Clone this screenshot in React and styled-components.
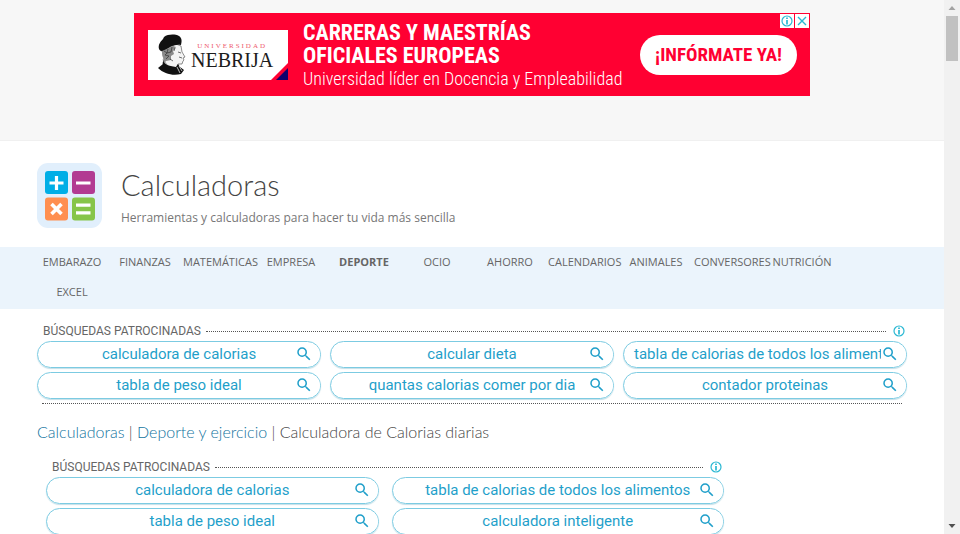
import React from "react";
import styled, { createGlobalStyle } from "styled-components";
import { MdSearch } from "react-icons/md";

const GlobalStyle = createGlobalStyle`
  *, *::before, *::after { box-sizing: border-box; }
  body { margin: 0; background: #fff; font-family: "Open Sans", sans-serif; color: #666; }
  a { color: inherit; text-decoration: none; }
  h1, p { margin: 0; font-weight: 400; }
`;

const Shell = styled.div`
  display: grid;
  grid-template-columns: minmax(0, 1fr) 16px;
  height: 100vh;
  overflow: hidden;
`;

const Page = styled.div`
  min-width: 0;
  overflow: hidden;
`;

const ScrollTrack = styled.div`
  display: flex;
  flex-direction: column;
  align-items: center;
  justify-content: space-between;
  background: #f1f1f1;
`;

const ScrollTop = styled.div`
  display: flex;
  flex-direction: column;
  align-items: center;
`;

const ScrollThumb = styled.div`
  width: 12px;
  height: 45px;
  background: #c1c1c1;
`;

const ArrowBox = styled.svg`
  display: block;
  width: 16px;
  height: 16px;
  fill: ${(p) => (p.$muted ? "#a3a3a3" : "#505050")};
`;

const AdStrip = styled.aside`
  display: flex;
  justify-content: center;
  padding: 13px 0 44px;
  background: #f7f7f7;
  border-bottom: 1px solid #f0f0f0;
`;

const Banner = styled.div`
  position: relative;
  display: flex;
  align-items: center;
  width: 676px;
  height: 83px;
  padding: 0 13px 0 14px;
  background: #ff0032;
  color: #fff;
  font-family: "Roboto Condensed", Roboto, sans-serif;
  font-family: "Liberation Sans Narrow", "Roboto Condensed", Roboto, sans-serif;
`;

const School = styled.div`
  position: relative;
  display: flex;
  align-items: center;
  gap: 4px;
  width: 140px;
  height: 50px;
  padding-left: 9px;
  background: #fff;
  overflow: hidden;
`;

const Portrait = styled.svg`
  width: 30px;
  height: 42px;
  flex: none;
`;

const Corner = styled.svg`
  position: absolute;
  right: 0;
  bottom: 0;
  width: 17px;
  height: 17px;
`;

const SchoolName = styled.div`
  display: flex;
  flex-direction: column;
  align-items: center;
  font-family: "Liberation Serif", serif;
`;

const SchoolKind = styled.span`
  padding-top: 2px;
  font-size: 7px;
  line-height: 8px;
  letter-spacing: 2px;
  color: #ee5a6c;
`;

const SchoolTitle = styled.span`
  font-size: 20px;
  line-height: 20px;
  color: #1c1c1c;
`;

const Pitch = styled.div`
  flex: 1;
  padding: 2px 0 0 15px;
  white-space: nowrap;
`;

const PitchTitle = styled.p`
  && { font-weight: 700; }
  font-size: 22px;
  line-height: 23px;
`;

const PitchText = styled.p`
  && { font-weight: 300; }
  font-size: 18px;
  line-height: 23px;
`;

const AdButton = styled.button`
  width: 157px;
  height: 40px;
  padding: 0;
  border: 0;
  border-radius: 20px;
  background: #fff;
  color: #ff0032;
  font: 700 19px "Liberation Sans Narrow", "Roboto Condensed", Roboto, sans-serif;
  white-space: nowrap;
`;

const AdTools = styled.div`
  position: absolute;
  top: 1px;
  right: 1px;
  display: flex;
  gap: 1px;
`;

const AdTool = styled.button`
  display: grid;
  place-items: center;
  width: 14px;
  height: 14px;
  padding: 0;
  border: 0;
  background: #fff;
  color: #2bb8d3;
`;

const Header = styled.header`
  display: flex;
  gap: 19px;
  padding: 22px 37px 19px;
`;

const Logo = styled.svg`
  width: 65px;
  height: 65px;
`;

const Brand = styled.div`
  padding-top: 5px;
`;

const SiteTitle = styled.h1`
  font: 300 29px/34px Lato, sans-serif;
  color: #444;
`;

const Tagline = styled.p`
  padding-top: 6px;
  font-size: 12px;
  line-height: 20px;
  color: #777;
`;

const Menu = styled.nav`
  display: grid;
  grid-template-columns: repeat(auto-fill, 70px);
  column-gap: 3px;
  row-gap: 9px;
  padding: 4px 37px 7px;
  background: #ebf4fc;
`;

const MenuLink = styled.a`
  display: grid;
  grid-template-columns: minmax(100%, max-content);
  line-height: 21px;
  font-size: 11px;
  font-weight: ${(p) => (p.$active ? 700 : 400)};
  text-align: center;
  white-space: nowrap;
  color: #666;
`;

const Sponsored = styled.section`
  max-width: ${(p) => (p.$narrow ? "678px" : "none")};
  margin: ${(p) => (p.$narrow ? "14px 0 0 46px" : "12px 37px 0")};
  font-family: Roboto, sans-serif;
`;

const SponsoredHead = styled.div`
  display: flex;
  align-items: center;
  height: 20px;
  padding: 0 2px 0 6px;
  font-size: 12px;
  line-height: 20px;
  color: #666;
`;

const Dots = styled.span`
  flex: 1;
  margin: 1px 7px 0 5px;
  border-top: 1px dotted #555;
`;

const InfoButton = styled.button`
  display: grid;
  place-items: center;
  width: 12px;
  height: 12px;
  padding: 0;
  border: 0;
  background: none;
  color: #2bb8d3;
`;

const Pills = styled.div`
  display: grid;
  grid-template-columns: repeat(${(p) => p.$columns}, minmax(0, 1fr));
  column-gap: ${(p) => (p.$columns === 3 ? "9px" : "13px")};
  row-gap: 4px;
`;

const Pill = styled.a`
  position: relative;
  height: 27px;
  padding: 0 10px;
  border: 1px solid #7ccbe2;
  border-radius: 14px;
  box-shadow: 0 1px 1px #c4dfe8;
  font-size: 15px;
  line-height: 24px;
  text-align: center;
  white-space: nowrap;
  overflow: hidden;
  color: #1f9fca;
`;

const PillIcon = styled.span`
  position: absolute;
  top: 3px;
  right: 0;
  display: flex;
  padding-right: 7px;
  background: #fff;
`;

const EndDots = styled.div`
  margin: 4px 5px 0;
  border-top: 1px dotted #555;
`;

const Crumbs = styled.nav`
  padding: 17px 37px 0;
  font: 300 16px/22px Lato, sans-serif;
  color: #444;
`;

const CrumbLink = styled.a`
  && { color: #12749e; }
`;

const menu = [
  "EMBARAZO", "FINANZAS", "MATEMÁTICAS", "EMPRESA", "DEPORTE", "OCIO",
  "AHORRO", "CALENDARIOS", "ANIMALES", "CONVERSORES", "NUTRICIÓN", "EXCEL",
];

const wideSearches = [
  "calculadora de calorias", "calcular dieta", "tabla de calorias de todos los alimentos",
  "tabla de peso ideal", "quantas calorias comer por dia", "contador proteinas",
];

const narrowSearches = [
  "calculadora de calorias", "tabla de calorias de todos los alimentos",
  "tabla de peso ideal", "calculadora inteligente",
];

function InfoIcon() {
  return (
    <svg width="12" height="12" viewBox="0 0 12 12" fill="none" stroke="currentColor" aria-hidden="true">
      <circle cx="6" cy="6" r="5" strokeWidth="1.2" />
      <path d="M6 2.6v1.4M6 5v4.4" strokeWidth="1.7" />
    </svg>
  );
}

function SponsoredBlock({ items, columns }) {
  return (
    <Sponsored $narrow={columns === 2} aria-label="Búsquedas patrocinadas">
      <SponsoredHead>
        <span>BÚSQUEDAS PATROCINADAS</span>
        <Dots />
        <InfoButton aria-label="Información"><InfoIcon /></InfoButton>
      </SponsoredHead>
      <Pills $columns={columns}>
        {items.map((text) => (
          <Pill key={text} href="#">
            {text}
            <PillIcon><MdSearch size={18} /></PillIcon>
          </Pill>
        ))}
      </Pills>
      <EndDots />
    </Sponsored>
  );
}

function AdBanner() {
  return (
    <Banner>
      <School>
        <Portrait viewBox="0 0 30 42" aria-hidden="true">
          <path d="M9 15L8 22l-2 4 5 6 8 3 2-5 4 0 1-3 1-1-1-2 2-1-3-5-1-6-5-2z" fill="#f4f4f4" stroke="#444" strokeWidth=".6" />
          <path d="M2 15C1 11 3 8 6 5l1-2c4-3 11-3 15-1 3 2 3 5 2 9-6-1-11 1-16 6-3 1-5 0-6-2z" fill="#111" />
          <path d="M5 17l11-5 3 1-3 4 1 3-3 2v4l-5 1-3 4c-2-2 1-4 1-6-2-2-2-5-2-8z" fill="#8a8a8a" />
          <path d="M7 17l3 2-2 2 4 1-3 3M11 15l-1 4 4-1M15 13l-1 5M18 14l-1 3M21 18l3 1M22 23l3 1M13 25l3 2" fill="none" stroke="#333" strokeWidth=".7" />
          <path d="M6 26c1 4 5 6 13 7l2-3 2 3 4 3-3 4C16 42 7 40 1 34l5-4z" fill="#111" />
          <path d="M20 33l3 6M22 32l3 5" stroke="#fff" strokeWidth=".7" />
        </Portrait>
        <SchoolName>
          <SchoolKind>UNIVERSIDAD</SchoolKind>
          <SchoolTitle>NEBRIJA</SchoolTitle>
        </SchoolName>
        <Corner viewBox="0 0 17 17" aria-hidden="true">
          <path d="M17 0v17H0z" fill="#ff0032" />
          <path d="M17 5v12H5z" fill="#12006c" />
        </Corner>
      </School>
      <Pitch>
        <PitchTitle>CARRERAS Y MAESTRÍAS<br />OFICIALES EUROPEAS</PitchTitle>
        <PitchText>Universidad líder en Docencia y Empleabilidad</PitchText>
      </Pitch>
      <AdButton>¡INFÓRMATE YA!</AdButton>
      <AdTools>
        <AdTool aria-label="Información del anuncio"><InfoIcon /></AdTool>
        <AdTool aria-label="Cerrar anuncio">
          <svg width="12" height="12" viewBox="0 0 12 12" stroke="currentColor" strokeWidth="1.4" aria-hidden="true">
            <path d="M2 2l8 8M10 2l-8 8" />
          </svg>
        </AdTool>
      </AdTools>
    </Banner>
  );
}

function CalculatorLogo() {
  return (
    <Logo viewBox="0 0 65 65" aria-hidden="true">
      <rect width="65" height="65" rx="11" fill="#e1effc" />
      <rect x="8" y="8" width="23" height="23" rx="3" fill="#00aee6" />
      <rect x="35" y="8" width="23" height="23" rx="3" fill="#b23b92" />
      <rect x="8" y="34.500" width="23" height="23" rx="3" fill="#ff8f50" />
      <rect x="35" y="34.500" width="23" height="23" rx="3" fill="#86c549" />
      <g stroke="#fff" strokeWidth="3.200">
        <path d="M12.500 20h14M19.500 13v14M39 20h14.500M39 42.200h14.500M39 49.800h14.500" />
        <path d="M14.500 41l10 10M24.500 41l-10 10" strokeWidth="3.600" />
      </g>
    </Logo>
  );
}

export default function App() {
  return (
    <>
      <GlobalStyle />
      <Shell>
        <Page>
          <AdStrip><AdBanner /></AdStrip>
          <Header>
            <CalculatorLogo />
            <Brand>
              <SiteTitle>Calculadoras</SiteTitle>
              <Tagline>Herramientas y calculadoras para hacer tu vida más sencilla</Tagline>
            </Brand>
          </Header>
          <Menu>
            {menu.map((name) => (
              <MenuLink key={name} href="#" $active={name === "DEPORTE"}>{name}</MenuLink>
            ))}
          </Menu>
          <SponsoredBlock items={wideSearches} columns={3} />
          <Crumbs aria-label="Ruta">
            <CrumbLink href="#">Calculadoras</CrumbLink> | <CrumbLink href="#">Deporte y ejercicio</CrumbLink> | Calculadora de Calorias diarias
          </Crumbs>
          <SponsoredBlock items={narrowSearches} columns={2} />
        </Page>
        <ScrollTrack aria-hidden="true">
          <ScrollTop>
            <ArrowBox $muted viewBox="0 0 16 16"><path d="M4.500 10L8 6l3.500 4z" /></ArrowBox>
            <ScrollThumb />
          </ScrollTop>
          <ArrowBox viewBox="0 0 16 16"><path d="M4.500 6L8 10l3.500-4z" /></ArrowBox>
        </ScrollTrack>
      </Shell>
    </>
  );
}
